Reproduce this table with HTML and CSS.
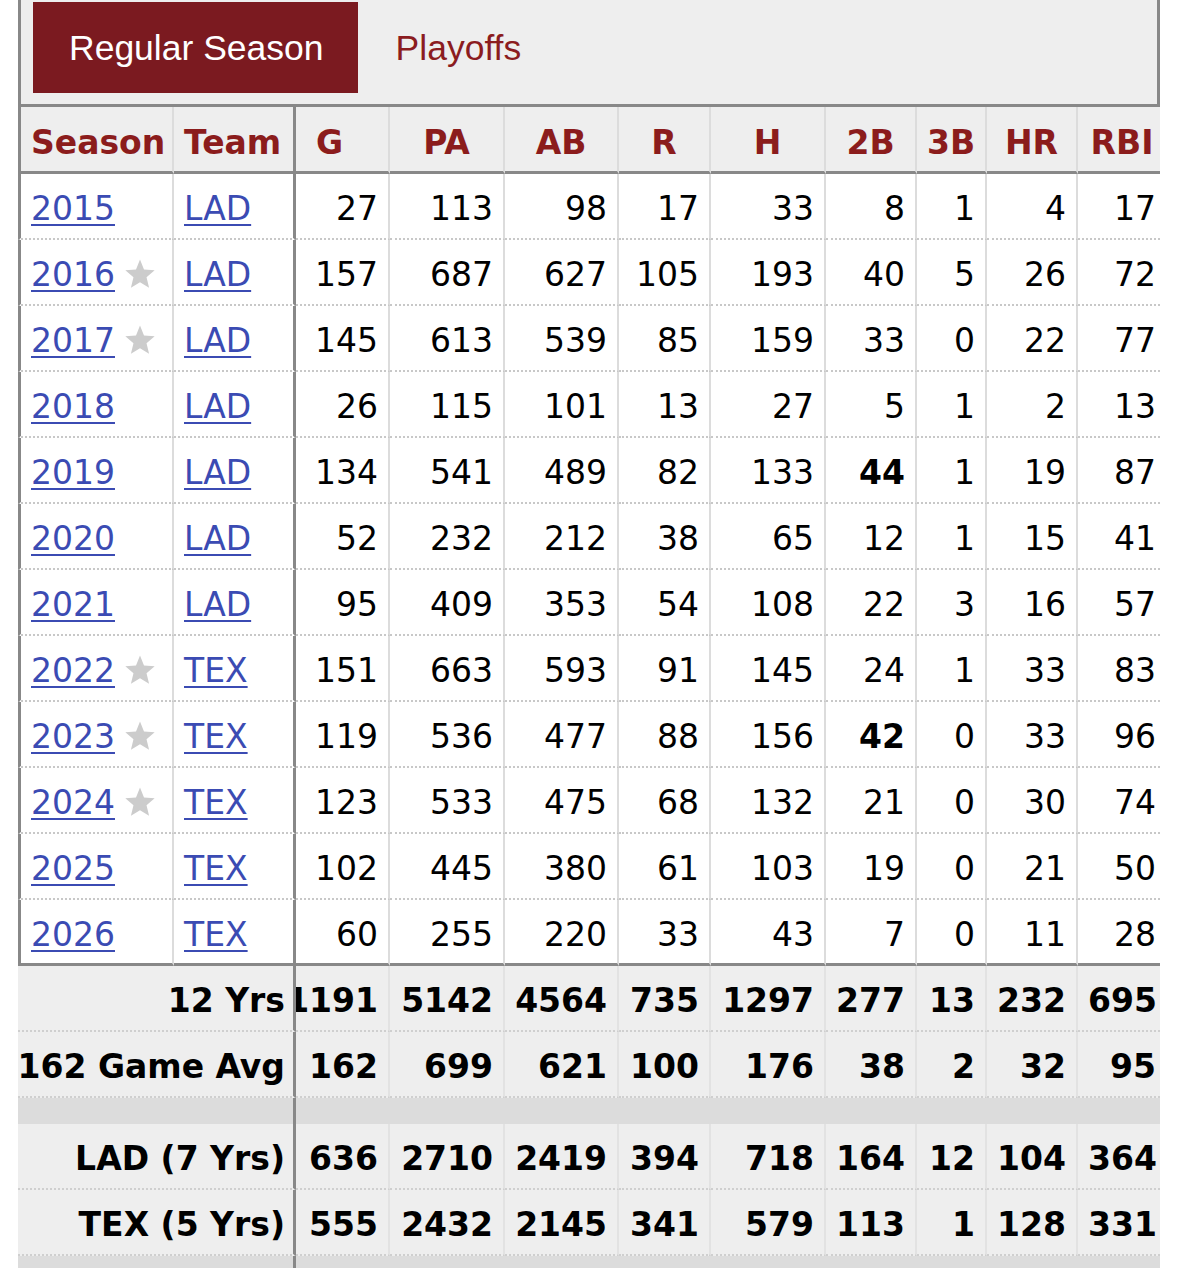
FILE: index.html
```html
<!DOCTYPE html>
<html lang="en">
<head>
<meta charset="utf-8">
<title>Batting Stats</title>
<link rel="stylesheet" href="styles.css">
</head>
<body>
<div class="stats">
  <div class="tabs">
    <span class="tab active">Regular Season</span>
    <span class="tab">Playoffs</span>
  </div>
  <table class="grid">
    <thead>
      <tr>
        <th class="c-season lbl">Season</th>
        <th class="c-team lbl">Team</th>
        <th class="c-g g-head">G</th>
        <th class="c-pa">PA</th>
        <th class="c-ab">AB</th>
        <th class="c-r">R</th>
        <th class="c-h">H</th>
        <th class="c-2b">2B</th>
        <th class="c-3b">3B</th>
        <th class="c-hr">HR</th>
        <th class="c-rbi">RBI</th>
      </tr>
    </thead>
    <tbody>
      <tr><td class="first"><a href="#">2015</a></td><td class="team"><a href="#">LAD</a></td><td>27</td><td>113</td><td>98</td><td>17</td><td>33</td><td>8</td><td>1</td><td>4</td><td>17</td></tr>
      <tr><td class="first"><a href="#">2016</a><svg class="star" viewBox="0 0 24 24"><polygon points="12,1.2 15,8.6 23,9.2 16.9,14.4 18.8,22.4 12,18.1 5.2,22.4 7.1,14.4 1,9.2 9,8.6"/></svg></td><td class="team"><a href="#">LAD</a></td><td>157</td><td>687</td><td>627</td><td>105</td><td>193</td><td>40</td><td>5</td><td>26</td><td>72</td></tr>
      <tr><td class="first"><a href="#">2017</a><svg class="star" viewBox="0 0 24 24"><polygon points="12,1.2 15,8.6 23,9.2 16.9,14.4 18.8,22.4 12,18.1 5.2,22.4 7.1,14.4 1,9.2 9,8.6"/></svg></td><td class="team"><a href="#">LAD</a></td><td>145</td><td>613</td><td>539</td><td>85</td><td>159</td><td>33</td><td>0</td><td>22</td><td>77</td></tr>
      <tr><td class="first"><a href="#">2018</a></td><td class="team"><a href="#">LAD</a></td><td>26</td><td>115</td><td>101</td><td>13</td><td>27</td><td>5</td><td>1</td><td>2</td><td>13</td></tr>
      <tr><td class="first"><a href="#">2019</a></td><td class="team"><a href="#">LAD</a></td><td>134</td><td>541</td><td>489</td><td>82</td><td>133</td><td><strong>44</strong></td><td>1</td><td>19</td><td>87</td></tr>
      <tr><td class="first"><a href="#">2020</a></td><td class="team"><a href="#">LAD</a></td><td>52</td><td>232</td><td>212</td><td>38</td><td>65</td><td>12</td><td>1</td><td>15</td><td>41</td></tr>
      <tr><td class="first"><a href="#">2021</a></td><td class="team"><a href="#">LAD</a></td><td>95</td><td>409</td><td>353</td><td>54</td><td>108</td><td>22</td><td>3</td><td>16</td><td>57</td></tr>
      <tr><td class="first"><a href="#">2022</a><svg class="star" viewBox="0 0 24 24"><polygon points="12,1.2 15,8.6 23,9.2 16.9,14.4 18.8,22.4 12,18.1 5.2,22.4 7.1,14.4 1,9.2 9,8.6"/></svg></td><td class="team"><a href="#">TEX</a></td><td>151</td><td>663</td><td>593</td><td>91</td><td>145</td><td>24</td><td>1</td><td>33</td><td>83</td></tr>
      <tr><td class="first"><a href="#">2023</a><svg class="star" viewBox="0 0 24 24"><polygon points="12,1.2 15,8.6 23,9.2 16.9,14.4 18.8,22.4 12,18.1 5.2,22.4 7.1,14.4 1,9.2 9,8.6"/></svg></td><td class="team"><a href="#">TEX</a></td><td>119</td><td>536</td><td>477</td><td>88</td><td>156</td><td><strong>42</strong></td><td>0</td><td>33</td><td>96</td></tr>
      <tr><td class="first"><a href="#">2024</a><svg class="star" viewBox="0 0 24 24"><polygon points="12,1.2 15,8.6 23,9.2 16.9,14.4 18.8,22.4 12,18.1 5.2,22.4 7.1,14.4 1,9.2 9,8.6"/></svg></td><td class="team"><a href="#">TEX</a></td><td>123</td><td>533</td><td>475</td><td>68</td><td>132</td><td>21</td><td>0</td><td>30</td><td>74</td></tr>
      <tr><td class="first"><a href="#">2025</a></td><td class="team"><a href="#">TEX</a></td><td>102</td><td>445</td><td>380</td><td>61</td><td>103</td><td>19</td><td>0</td><td>21</td><td>50</td></tr>
      <tr class="last"><td class="first"><a href="#">2026</a></td><td class="team"><a href="#">TEX</a></td><td>60</td><td>255</td><td>220</td><td>33</td><td>43</td><td>7</td><td>0</td><td>11</td><td>28</td></tr>
    </tbody>
    <tfoot>
      <tr><td class="label" colspan="2"><div class="fit">12 Yrs</div></td><td class="clip"><div class="fit">1191</div></td><td>5142</td><td>4564</td><td>735</td><td>1297</td><td>277</td><td>13</td><td>232</td><td>695</td></tr>
      <tr><td class="label" colspan="2"><div class="fit">162 Game Avg</div></td><td>162</td><td>699</td><td>621</td><td>100</td><td>176</td><td>38</td><td>2</td><td>32</td><td>95</td></tr>
      <tr class="spacer"><td class="label" colspan="2"></td><td colspan="9"></td></tr>
      <tr><td class="label" colspan="2"><div class="fit">LAD (7 Yrs)</div></td><td>636</td><td>2710</td><td>2419</td><td>394</td><td>718</td><td>164</td><td>12</td><td>104</td><td>364</td></tr>
      <tr><td class="label" colspan="2"><div class="fit">TEX (5 Yrs)</div></td><td>555</td><td>2432</td><td>2145</td><td>341</td><td>579</td><td>113</td><td>1</td><td>128</td><td>331</td></tr>
      <tr class="spacer end"><td class="label" colspan="2"></td><td colspan="9"></td></tr>
    </tfoot>
  </table>
</div>
</body>
</html>
```

FILE: styles.css
```css
html, body {
  margin: 0;
  padding: 0;
  background: #ffffff;
}

.stats {
  margin-left: 18px;
  width: 1142px;
  overflow: hidden;
}

.tabs {
  display: flex;
  align-items: flex-start;
  background: #eeeeee;
  border: 3px solid #888888;
  border-top: 0;
  height: 102px;
  padding: 2px 0 0 12px;
}

.tab {
  display: flex;
  align-items: center;
  height: 91px;
  padding: 1px 34px 0 36px;
  box-sizing: border-box;
  font-family: "Liberation Sans", Arial, sans-serif;
  font-size: 35.5px;
  color: #8b1c20;
  white-space: nowrap;
}

.tab.active {
  background: #7b1a20;
  color: #ffffff;
}

.tab + .tab {
  padding-left: 38px;
}

.grid {
  table-layout: fixed;
  width: 1150px;
  border-collapse: separate;
  border-spacing: 0;
  font-family: "DejaVu Sans", Verdana, sans-serif;
  font-size: 33px;
  color: #000000;
}

.grid th,
.grid td {
  box-sizing: border-box;
  padding: 5px 10px 0 10px;
  white-space: nowrap;
  vertical-align: middle;
  text-align: right;
  border-right: 2px solid #dcdcdc;
}

/* column widths (border-box) */
.c-season { width: 156px; }
.c-team { width: 122px; }
.c-g { width: 94px; }
.c-pa { width: 115px; }
.c-ab { width: 114px; }
.c-r { width: 92px; }
.c-h { width: 115px; }
.c-2b { width: 91px; }
.c-3b { width: 70px; }
.c-hr { width: 91px; }
.c-rbi { width: 90px; }

/* header */
.grid thead th {
  height: 67px;
  padding-top: 6px;
  background: #eeeeee;
  color: #8b1c1c;
  font-weight: bold;
  text-align: center;
  border-bottom: 3px solid #888888;
}

.grid thead th.lbl { text-align: left; }
.grid thead th.c-season { border-left: 3px solid #888888; }
.grid thead th.c-team { border-right: 3px solid #888888; }
.grid thead th.g-head { text-align: left; padding-left: 20px; }

/* body */
.grid tbody td {
  height: 66px;
  background: #ffffff;
  border-bottom: 2px dotted #c8c8c8;
}

.grid tbody td.first {
  text-align: left;
  border-left: 3px solid #888888;
}

.grid tbody td.team {
  text-align: left;
  border-right: 3px solid #888888;
}

.grid tbody tr.last td {
  border-bottom: 3px solid #888888;
}

.grid a {
  color: #3b4bb3;
  text-decoration: underline;
  text-decoration-thickness: 2px;
  text-underline-offset: 4px;
}

.grid strong { font-weight: bold; }

.star {
  width: 34px;
  height: 32px;
  margin-left: 8px;
  vertical-align: -4px;
  fill: #cccccc;
}

/* footer */
.grid tfoot td {
  height: 66px;
  background: #eeeeee;
  font-weight: bold;
  border-bottom: 2px dotted #cfcfcf;
  border-right: 2px solid #e2e2e2;
}

.grid tfoot td.label {
  padding: 5px 8px 0 0;
  border-right: 3px solid #888888;
}

.fit {
  display: flex;
  justify-content: flex-end;
  white-space: nowrap;
}

.grid tfoot td.clip {
  padding-left: 0;
}

.grid tfoot td.clip .fit {
  overflow: hidden;
}

.grid tfoot tr.spacer td {
  height: 26px;
  padding: 0;
  background: #dcdcdc;
  border-bottom: 0;
  border-right-color: #e2e2e2;
}

.grid tfoot tr.spacer td.label {
  padding: 0;
  border-right: 3px solid #888888;
}

.grid tfoot tr.spacer.end td {
  height: 40px;
}
```
